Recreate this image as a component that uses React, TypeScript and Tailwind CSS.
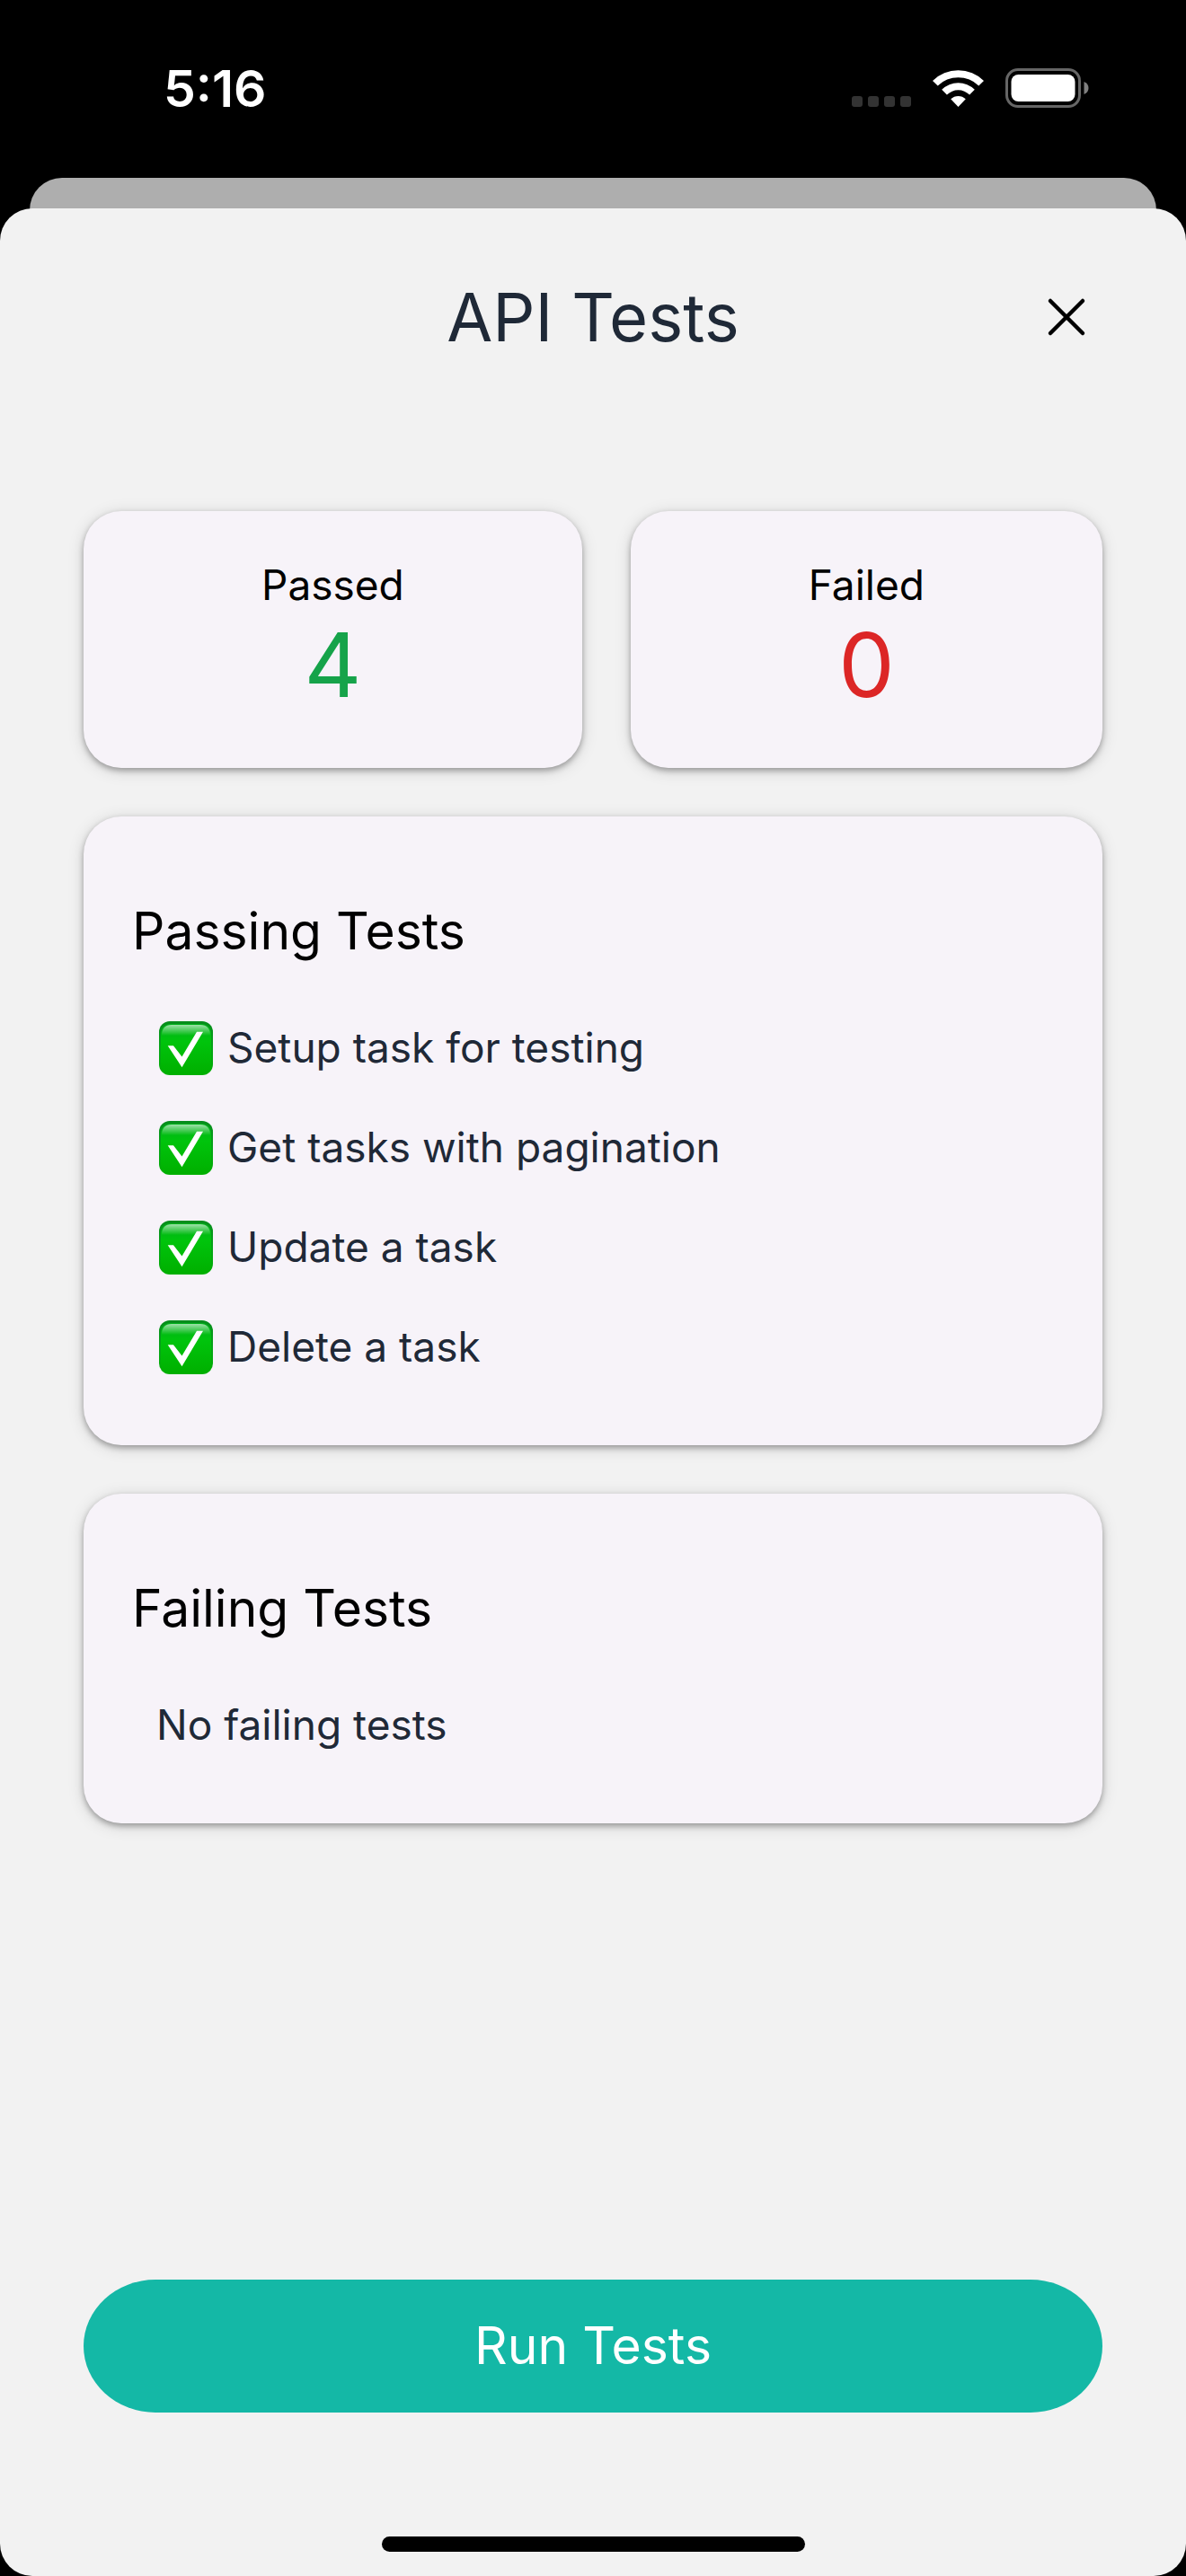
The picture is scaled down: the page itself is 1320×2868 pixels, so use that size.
import type { ReactNode } from 'react'
import { X } from 'lucide-react'

interface StatCardProps {
  label: string
  value: number
  valueClass: string
}

interface TestCardProps {
  title: string
  children: ReactNode
}

const passingTests = [
  'Setup task for testing',
  'Get tasks with pagination',
  'Update a task',
  'Delete a task',
]

const failingTests: string[] = []

function CheckMark() {
  return (
    <svg viewBox="0 0 60 60" className="size-[60px] shrink-0" aria-hidden="true">
      <defs>
        <linearGradient id="checkBody" x1="0" y1="0" x2="0" y2="1">
          <stop offset="0" stopColor="#00b01a" />
          <stop offset="0.35" stopColor="#00c40c" />
          <stop offset="1" stopColor="#00b000" />
        </linearGradient>
        <linearGradient id="checkEdge" x1="0" y1="0" x2="0" y2="1">
          <stop offset="0" stopColor="#078c1c" />
          <stop offset="0.5" stopColor="#06a518" />
          <stop offset="1" stopColor="#00b000" />
        </linearGradient>
        <linearGradient id="checkGloss" x1="0" y1="0" x2="0" y2="1">
          <stop offset="0" stopColor="#fff" stopOpacity="0.62" />
          <stop offset="1" stopColor="#fff" stopOpacity="0" />
        </linearGradient>
      </defs>
      <rect width="60" height="60" rx="12" fill="url(#checkEdge)" />
      <rect x="2" y="3" width="56" height="55" rx="10" fill="url(#checkBody)" />
      <path d="M3 16 Q3 4 14 4 H46 Q57 4 57 16 Z" fill="url(#checkGloss)" />
      <path d="M9.7 27.3 H16 L25.5 39.5 L42 11.7 H49 L25.5 51.3 Z" fill="#fff" />
    </svg>
  )
}

function StatusBar() {
  return (
    <div className="flex h-[198px] items-start justify-between pt-16 pr-[108px] pl-[182px] text-white">
      <div className="text-[57px] leading-[70px] font-semibold">5:16</div>
      <div className="flex gap-6 pt-3">
        <svg viewBox="0 0 66 44" className="h-11 w-[66px]" fill="#333" aria-hidden="true">
          <rect x="0" y="31" width="12" height="12" rx="3" />
          <rect x="18" y="31" width="12" height="12" rx="3" />
          <rect x="36" y="31" width="12" height="12" rx="3" />
          <rect x="54" y="31" width="12" height="12" rx="3" />
        </svg>
        <svg viewBox="0 -1 57 44" className="h-11 w-[57px]" fill="#fff" aria-hidden="true">
          <path d="M0 13 A40.5 40.5 0 0 1 57 13 L51.3 18.5 A32.5 32.5 0 0 0 5.7 18.5 Z" />
          <path d="M10.2 22.7 A26 26 0 0 1 46.8 22.7 L41.1 28.5 A17.8 17.8 0 0 0 15.9 28.5 Z" />
          <path d="M20.2 33.3 A11.8 11.8 0 0 1 36.8 33.3 L28.5 42 Z" />
        </svg>
        <svg viewBox="0 0 93 44" className="h-11 w-[93px]" aria-hidden="true">
          <rect x="1.5" y="1.5" width="81" height="41" rx="12.5" fill="none" stroke="#666" strokeWidth="3" />
          <rect x="6.5" y="7" width="71" height="30" rx="8" fill="#fff" />
          <path d="M87.5 15 Q92.5 17 92.5 22 Q92.5 27 87.5 29 Z" fill="#808080" />
        </svg>
      </div>
    </div>
  )
}

function StatCard({ label, value, valueClass }: StatCardProps) {
  return (
    <div className="flex-auto rounded-[42px] bg-[#f7f3f9] p-[54px] text-center shadow-[0_3px_6px_rgba(0,0,0,0.3),0_3px_18px_rgba(0,0,0,0.15)]">
      <div className="text-[46px] leading-[56px] text-black">{label}</div>
      <div className={`text-[99px] leading-[122px] ${valueClass}`}>{value}</div>
    </div>
  )
}

function TestCard({ title, children }: TestCardProps) {
  return (
    <section className="rounded-[42px] bg-[#f7f3f9] p-[54px] shadow-[0_3px_6px_rgba(0,0,0,0.3),0_3px_18px_rgba(0,0,0,0.15)]">
      <h2 className="text-[57px] leading-[148px] text-black">{title}</h2>
      <div className="text-[46px] leading-[111px] text-[#1f2937]">{children}</div>
    </section>
  )
}

export default function App() {
  return (
    <div className="flex min-h-screen flex-col bg-black font-['Inter',sans-serif]">
      <StatusBar />

      {/* Edge of the screen behind the modal */}
      <div className="mx-[33px] h-16 rounded-t-[36px] bg-[#aeaeae]" />

      <div className="relative -mt-[30px] flex flex-1 flex-col rounded-[36px] bg-[#f2f2f2]">
        <header className="grid h-[242px] grid-cols-[1fr_auto_1fr] items-center px-[93px]">
          <h1 className="col-start-2 text-[74px] leading-[96px] text-[#1f2937]">API Tests</h1>
          <button
            type="button"
            aria-label="Close"
            className="flex size-20 items-center justify-center justify-self-end text-black"
          >
            <X size={72} strokeWidth={1.5} />
          </button>
        </header>

        <main className="flex flex-1 flex-col gap-[54px] px-[93px] pt-[95px]">
          <div className="flex gap-[54px]">
            <StatCard label="Passed" value={passingTests.length} valueClass="text-[#16a34a]" />
            <StatCard label="Failed" value={failingTests.length} valueClass="text-[#dc2626]" />
          </div>

          <TestCard title="Passing Tests">
            <ul>
              {passingTests.map((name) => (
                <li key={name} className="flex items-center gap-4 pl-[30px]">
                  <CheckMark />
                  {name}
                </li>
              ))}
            </ul>
          </TestCard>

          <TestCard title="Failing Tests">
            <p className="pl-[27px]">No failing tests</p>
          </TestCard>

          <button
            type="button"
            className="mt-auto w-full rounded-[80px/74px] bg-[#14b8a6] text-[57px] leading-[148px] text-white"
          >
            Run Tests
          </button>
        </main>

        <div className="flex justify-center pt-[138px] pb-[27px]">
          <div className="h-[17px] w-[471px] rounded-full bg-black" />
        </div>
      </div>
    </div>
  )
}
